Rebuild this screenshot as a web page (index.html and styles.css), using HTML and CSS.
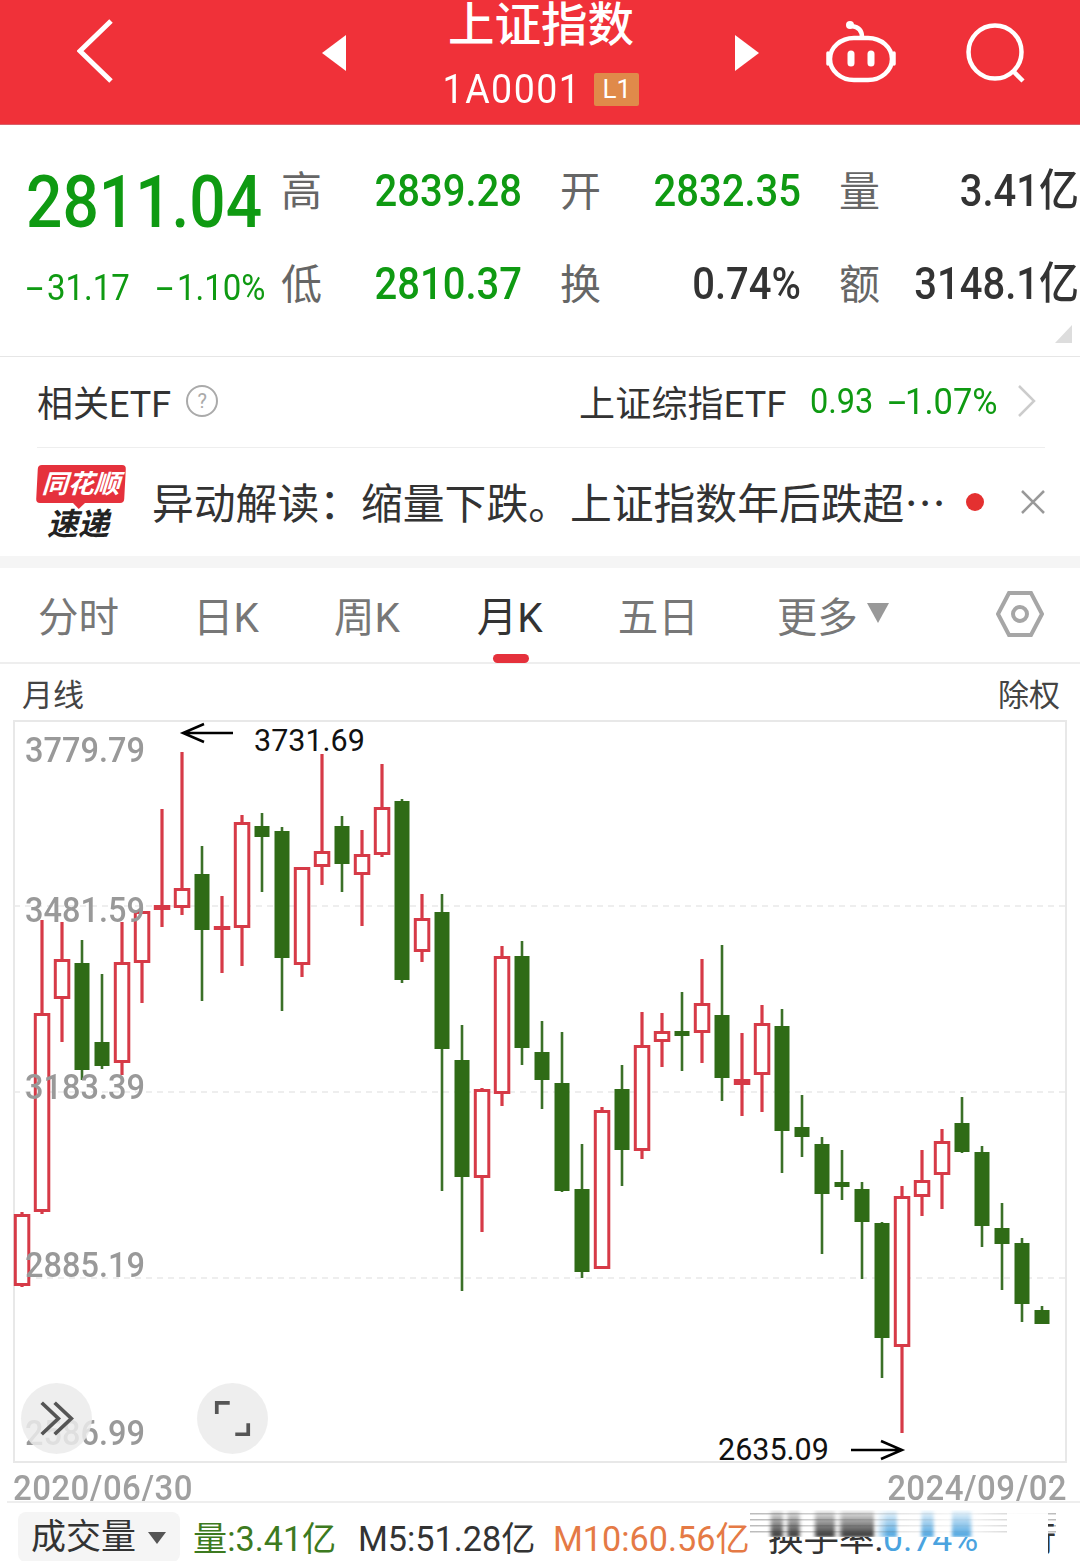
FILE: index.html
```html
<!DOCTYPE html>
<html lang="zh">
<head>
    <meta charset="UTF-8"/>
    <title>上证指数</title>
    <link rel="stylesheet" href="styles.css">
</head>
<body>
<header class="top-bar">
    <svg class="back-icon" viewBox="0 0 36 64"><polyline points="34,2 3,32 34,62"/></svg>
    <svg class="prev-icon" viewBox="0 0 24 36"><polygon points="24,0 24,36 0,18"/></svg>
    <div class="title-block">
        <div class="title">上证指数</div>
        <div class="code-line"><span class="code">1A0001</span><span class="level">L1</span></div>
    </div>
    <svg class="next-icon" viewBox="0 0 24 36"><polygon points="0,0 0,36 24,18"/></svg>
    <svg class="robot-icon" viewBox="0 0 70 64">
        <rect x="4" y="18" width="62" height="42" rx="24" ry="21"/>
        <path class="ear" d="M2 33 V44 M68 33 V44"/>
        <circle class="ball" cx="24" cy="5" r="4"/>
        <path d="M26 6 C32 7 36 10 36 17"/>
        <line class="eye" x1="25" y1="34" x2="25" y2="43"/>
        <line class="eye" x1="45" y1="34" x2="45" y2="43"/>
    </svg>
    <svg class="search-icon" viewBox="0 0 62 66">
        <circle cx="29" cy="31" r="26.5"/>
        <line x1="47" y1="50" x2="57" y2="60"/>
    </svg>
</header>

<section class="quote">
    <div class="quote-main">
        <div class="price"><span class="num">2811.04</span></div>
        <div class="change"><span class="num"><i class="minus">-</i>31.17</span><span class="num"><i class="minus">-</i>1.10%</span></div>
    </div>
    <div class="quote-grid">
        <div class="cell"><span class="cell-label">高</span><span class="cell-value green num">2839.28</span></div>
        <div class="cell"><span class="cell-label">开</span><span class="cell-value green num">2832.35</span></div>
        <div class="cell"><span class="cell-label">量</span><span class="cell-value num">3.41亿</span></div>
        <div class="cell"><span class="cell-label">低</span><span class="cell-value green num">2810.37</span></div>
        <div class="cell"><span class="cell-label">换</span><span class="cell-value num">0.74%</span></div>
        <div class="cell"><span class="cell-label">额</span><span class="cell-value num">3148.1亿</span></div>
    </div>
    <div class="corner-mark"></div>
</section>

<section class="etf-row">
    <div class="etf-left">相关ETF<span class="help">?</span></div>
    <div class="etf-right">
        <span class="etf-name">上证综指ETF</span>
        <span class="etf-price green">0.93</span>
        <span class="etf-change green"><i class="minus">-</i>1.07%</span>
        <svg class="chevron" viewBox="0 0 20 34"><polyline points="2,2 17,17 2,32"/></svg>
    </div>
</section>

<section class="news-row">
    <div class="news-logo">
        <div class="logo-top">同花顺</div>
        <div class="logo-bottom">速递</div>
    </div>
    <div class="news-text">异动解读：缩量下跌。上证指数年后跌超…</div>
    <span class="news-dot"></span>
    <svg class="news-close" viewBox="0 0 26 26"><path d="M2 2 L24 24 M24 2 L2 24"/></svg>
</section>

<nav class="tabs">
    <span class="tab tab-fs">分时</span>
    <span class="tab tab-rk">日K</span>
    <span class="tab tab-zk">周K</span>
    <span class="tab tab-yk active">月K</span>
    <span class="tab tab-wr">五日</span>
    <span class="tab tab-more">更多<i class="tri"></i></span>
    <svg class="hex-icon" viewBox="0 0 48 46">
        <polygon points="13,2 35,2 46,23 35,44 13,44 2,23"/>
        <circle cx="24" cy="23" r="7"/>
    </svg>
</nav>

<div class="chart-head"><span>月线</span><span>除权</span></div>

<div class="chart" id="chart">
    <svg id="candles" class="candles" width="1054" height="743" viewBox="13 720 1054 743"></svg>
    <span class="axis axis-1">3779.79</span>
    <span class="axis axis-2">3481.59</span>
    <span class="axis axis-3">3183.39</span>
    <span class="axis axis-4">2885.19</span>
    <span class="axis axis-5">2586.99</span>
    <span class="note note-high">3731.69</span>
    <span class="note note-low">2635.09</span>
    <button class="round-btn btn-next">
        <svg viewBox="0 0 40 40"><path d="M4 3 L22 20 L4 37 M18 3 L36 20 L18 37"/></svg>
    </button>
    <button class="round-btn btn-full">
        <svg viewBox="0 0 40 40"><path d="M3 15 V3 H17 M37 25 V37 H23"/></svg>
    </button>
</div>

<div class="dates"><span>2020/06/30</span><span>2024/09/02</span></div>

<footer class="volume-bar">
    <div class="chip">成交量<i class="chip-tri"></i></div>
    <span class="vol vol-now">量:<b>3.41亿</b></span>
    <span class="vol vol-m5">M5:51.28亿</span>
    <span class="vol vol-m10">M10:60.56亿</span>
    <span class="vol vol-rate">换手率:<b>0.74%</b></span>
    <span class="vol vol-cut">行</span>
    <div class="smear"></div>
</footer>

<script src="chart.js"></script>
</body>
</html>
```

FILE: styles.css
```css
body {
    margin: 0;
    width: 1080px;
    height: 1561px;
    overflow: hidden;
    background: #ffffff;
    color: #333333;
    font-family: Roboto, "Noto Sans CJK SC", sans-serif;
}

.green { color: #0f9a12; }

/* digits in the shot are taller than Roboto */
.num {
    display: inline-block;
    transform: scaleY(1.12);
}

/* the app draws a long, thin minus */
.minus {
    display: inline-block;
    width: 21px;
    font-style: normal;
    transform: scaleX(1.9);
    transform-origin: left center;
}

/* red bar */
.top-bar {
    height: 124px;
    background: #f03139;
    border-bottom: 1px solid #d9606a;
    display: flex;
    align-items: flex-start;
    padding-left: 77px;
}

.back-icon {
    width: 36px;
    height: 64px;
    margin-top: 19px;
}
.back-icon polyline {
    fill: none;
    stroke: #ffffff;
    stroke-width: 5;
}

.prev-icon, .next-icon {
    width: 24px;
    height: 36px;
    margin-top: 35px;
    fill: #ffffff;
}
.prev-icon { margin-left: 209px; }

.title-block {
    width: 390px;
    text-align: center;
    color: #ffffff;
}
.title {
    font-size: 46.5px;
    line-height: 50px;
    font-weight: 500;
    height: 69px;
}
.code-line {
    display: flex;
    justify-content: center;
    align-items: center;
    gap: 13px;
    height: 40px;
}
.code {
    font-size: 37.5px;
    letter-spacing: 1.5px;
    display: inline-block;
    transform: scaleY(1.1);
}
.level {
    width: 45px;
    height: 33px;
    background: #e08a4a;
    border-radius: 2px;
    font-size: 26px;
    line-height: 33px;
}

.next-icon { margin-left: -1px; }

.robot-icon {
    width: 70px;
    height: 64px;
    margin-left: 67px;
    margin-top: 20px;
    fill: none;
    stroke: #ffffff;
    stroke-width: 4.5;
}
.robot-icon .ball {
    fill: #ffffff;
    stroke: none;
}
.robot-icon .ear {
    stroke-width: 3.5;
    stroke-linecap: round;
}
.robot-icon .eye {
    stroke-width: 7;
    stroke-linecap: round;
}

.search-icon {
    width: 62px;
    height: 66px;
    margin-left: 70px;
    margin-top: 21px;
    fill: none;
    stroke: #ffffff;
    stroke-width: 4.5;
}

/* quote block */
.quote {
    position: relative;
    height: 232px;
    border-bottom: 1px solid #e6e6e6;
    display: flex;
    box-sizing: border-box;
    padding-left: 26px;
}
.quote-main {
    width: 255px;
}
.price {
    margin-top: 40px;
    font-size: 64px;
    line-height: 76px;
    font-weight: 500;
    color: #0f9a12;
}
.change {
    margin-top: 27px;
    display: flex;
    gap: 26px;
    font-size: 33px;
    line-height: 40px;
    color: #0f9a12;
}
.quote-grid {
    display: grid;
    grid-template-columns: 240px 240px 239px;
    column-gap: 39px;
    grid-auto-rows: 93px;
    padding-top: 19px;
}
.cell {
    display: flex;
    justify-content: space-between;
    align-items: center;
    height: 93px;
}
.cell-label {
    font-size: 41px;
    color: #666666;
    width: 41px;
    margin-top: -6px;
}
.cell-value {
    font-size: 40px;
    line-height: 46px;
    height: 46px;
    font-weight: 500;
    white-space: nowrap;
    margin-right: -1px;
}
.corner-mark {
    position: absolute;
    right: 8px;
    bottom: 13px;
    width: 0;
    height: 0;
    border-left: 17px solid transparent;
    border-bottom: 18px solid #dddddd;
}

/* etf row */
.etf-row {
    height: 91px;
    margin: 0 35px 0 37px;
    padding-bottom: 2px;
    border-bottom: 1px solid #eeeeee;
    box-sizing: border-box;
    display: flex;
    justify-content: space-between;
    align-items: center;
    font-size: 36px;
}
.etf-left {
    display: flex;
    align-items: center;
}
.help {
    width: 28px;
    height: 28px;
    margin-left: 15px;
    border: 2px solid #aaaaaa;
    border-radius: 50%;
    color: #aaaaaa;
    font-size: 20px;
    line-height: 28px;
    text-align: center;
}
.etf-right {
    display: flex;
    align-items: center;
    padding-right: 8px;
}
.etf-name { width: 231px; letter-spacing: 0.2px; }
.etf-price {
    width: 78px;
    font-size: 32.5px;
    transform: scaleY(1.1);
}
.etf-change {
    width: 129px;
    font-size: 34.5px;
    transform: scaleY(1.06);
}
.etf-change .minus { width: 17px; }
.chevron {
    width: 20px;
    height: 34px;
    fill: none;
    stroke: #cccccc;
    stroke-width: 2.5;
}

/* news row */
.news-row {
    height: 108px;
    padding-left: 37px;
    display: flex;
    align-items: center;
    border-bottom: 12px solid #f5f5f5;
}
.news-logo {
    width: 88px;
    text-align: center;
    font-style: italic;
    font-weight: 700;
}
.logo-top {
    position: relative;
    height: 38px;
    background: #e5313c;
    color: #ffffff;
    font-size: 26px;
    line-height: 38px;
    white-space: nowrap;
    border-radius: 4px;
    transform: skewX(-3deg);
}
.logo-top::after {
    content: "";
    position: absolute;
    left: 36px;
    bottom: -6px;
    width: 0;
    height: 0;
    border-left: 7px solid transparent;
    border-right: 7px solid transparent;
    border-top: 7px solid #e5313c;
}
.logo-bottom {
    font-size: 31px;
    line-height: 30px;
    margin-top: 7px;
    margin-left: -6px;
    color: #222222;
}
.news-text {
    margin-left: 27px;
    margin-top: -3px;
    width: 798px;
    font-family: "Noto Sans CJK SC", sans-serif;
    font-size: 41.8px;
    white-space: nowrap;
    color: #333333;
}
.news-dot {
    width: 18px;
    height: 18px;
    background: #e43030;
    border-radius: 50%;
    margin-left: 16px;
}
.news-close {
    width: 26px;
    height: 26px;
    margin-left: 36px;
    fill: none;
    stroke: #999999;
    stroke-width: 2.5;
}

/* period tabs */
.tabs {
    position: relative;
    height: 94px;
    border-bottom: 2px solid #eeeeee;
    display: flex;
    align-items: center;
    font-size: 40.5px;
    color: #777777;
}
.tab { position: relative; top: -1px; white-space: nowrap; }
.tab-fs { margin-left: 38px; }
.tab-rk { margin-left: 74px; }
.tab-zk { margin-left: 75px; }
.tab-yk { margin-left: 77px; color: #333333; }
.tab-wr { margin-left: 75px; }
.tab-more { margin-left: 78px; display: flex; align-items: center; }
.tri {
    width: 0;
    height: 0;
    margin-left: 9px;
    margin-bottom: 2px;
    border-left: 11px solid transparent;
    border-right: 11px solid transparent;
    border-top: 20px solid #999999;
}
.tab.active::after {
    content: "";
    position: absolute;
    left: 16px;
    bottom: -19px;
    width: 36px;
    height: 9px;
    background: #e5313c;
    border-radius: 5px;
}
.hex-icon {
    width: 48px;
    height: 46px;
    margin-left: 107px;
    margin-top: -2px;
    fill: none;
    stroke: #a6a6a6;
    stroke-width: 4;
}

.chart-head {
    height: 56px;
    padding: 0 20px 0 22px;
    display: flex;
    justify-content: space-between;
    align-items: center;
    font-size: 31px;
    color: #444444;
}

/* chart, free canvas */
.chart {
    position: relative;
    width: 1054px;
    height: 743px;
    margin-left: 13px;
}
.candles {
    position: absolute;
    left: 0;
    top: 0;
}
.axis {
    position: absolute;
    left: 12px;
    font-size: 32.5px;
    font-weight: 500;
    line-height: 36px;
    color: #999999;
    transform: scaleY(1.08);
}
.axis-1 { top: 12px; }
.axis-2 { top: 172px; }
.axis-3 { top: 349px; }
.axis-4 { top: 527px; }
.axis-5 { top: 695px; }
.note {
    position: absolute;
    font-size: 30.5px;
    line-height: 36px;
    color: #111111;
}
.note-high { left: 241px; top: 3px; }
.note-low { left: 705px; top: 712px; }
.round-btn {
    position: absolute;
    top: 663px;
    width: 71px;
    height: 71px;
    padding: 17px;
    border: 0;
    border-radius: 50%;
    background: rgba(235, 235, 235, 0.85);
}
.round-btn svg {
    display: block;
    width: 37px;
    height: 37px;
    fill: none;
    stroke: #555555;
    stroke-width: 4;
}
.btn-next { left: 8px; }
.btn-full { left: 184px; }

.dates {
    height: 38px;
    box-sizing: border-box;
    padding: 10px 13px 0;
    display: flex;
    justify-content: space-between;
    align-items: center;
    font-size: 33px;
    font-weight: 500;
    letter-spacing: 0.4px;
    color: #a0a0a0;
    transform: scaleY(1.05);
}

/* volume legend */
.volume-bar {
    position: relative;
    height: 60px;
    margin-left: 7px;
    border-top: 2px solid #eeeeee;
    font-size: 34.2px;
    white-space: nowrap;
}
.chip {
    position: absolute;
    left: 11px;
    top: 9px;
    width: 162px;
    height: 50px;
    box-sizing: border-box;
    padding-left: 13px;
    background: #f5f5f5;
    border-radius: 8px;
    font-size: 35px;
    line-height: 52px;
    color: #333333;
}
.chip-tri {
    position: absolute;
    left: 130px;
    top: 20px;
    width: 0;
    height: 0;
    border-left: 9px solid transparent;
    border-right: 9px solid transparent;
    border-top: 12px solid #555555;
}
.vol {
    position: absolute;
    top: 13px;
    line-height: 46px;
}
.vol b { font-weight: 400; }
.vol-now { left: 186px; color: #3d7a20; }
.vol-m5 { left: 351px; color: #333333; }
.vol-m10 { left: 546px; color: #e57a45; }
.vol-rate { left: 761px; color: #333333; font-size: 35.5px; }
.vol-rate b { color: #4aa3df; }
/* sits under a white patch, only its right edge shows */
.vol-cut {
    left: 1015px;
    z-index: 1;
    color: #333333;
}

/* white patch that hides the left of the last label */
.volume-bar::after {
    content: "";
    position: absolute;
    z-index: 2;
    left: 1000px;
    top: 5px;
    width: 41px;
    height: 55px;
    background: linear-gradient(180deg, transparent 0, #ffffff 6px);
}

/* screenshot smear across the top of the legend */
.smear {
    position: absolute;
    left: 743px;
    top: 7px;
    width: 306px;
    height: 27px;
    background: #ffffff;
    overflow: hidden;
}
.smear::before {
    content: "";
    position: absolute;
    inset: 0;
    background: linear-gradient(90deg,
        transparent 6%, #333 7.5%, #333 10%, transparent 11.5%,
        #333 13%, #333 15.5%, transparent 17%,
        transparent 20.5%, #333 22%, #333 27%, transparent 28.5%,
        #333 30.5%, #333 40%, transparent 41%,
        #4aa3df 45%, #4aa3df 47.5%, transparent 48.5%,
        transparent 55.5%, #4aa3df 56.5%, #4aa3df 59.5%, transparent 60.5%,
        transparent 65.5%, #4aa3df 66.5%, #4aa3df 71.5%, transparent 73%);
    filter: blur(1.5px);
    -webkit-mask-image: linear-gradient(to top, #000, rgba(0, 0, 0, 0.55) 50%, rgba(0, 0, 0, 0.08));
    mask-image: linear-gradient(to top, #000, rgba(0, 0, 0, 0.55) 50%, rgba(0, 0, 0, 0.08));
}
.smear::after {
    content: "";
    position: absolute;
    inset: 0;
    background: repeating-linear-gradient(180deg,
        rgba(60, 60, 60, 0.35) 3px, rgba(60, 60, 60, 0.35) 4px, transparent 5px, transparent 9px);
    -webkit-mask-image: linear-gradient(90deg, #000, rgba(0, 0, 0, 0.1) 70%, #000);
    mask-image: linear-gradient(90deg, #000, rgba(0, 0, 0, 0.1) 70%, #000);
}
```

FILE: chart.js
```js
// one candle: [high, body top, body bottom, low, up?]  values are screen y, x steps by 20
const candles = [
    [1212, 1214, 1286, 1287, 1], [920, 1013, 1212, 1214, 1], [922, 959, 999, 1042, 1], [940, 963, 1070, 1080, 0],
    [974, 1042, 1066, 1069, 0], [922, 962, 1063, 1075, 1], [911, 911, 963, 1003, 1], [809, 905, 910, 927, 1],
    [752, 888, 908, 915, 1], [846, 874, 930, 1001, 0], [896, 926, 928, 973, 1], [815, 822, 928, 966, 1],
    [813, 826, 837, 892, 0], [827, 831, 958, 1011, 0], [867, 867, 965, 977, 1], [754, 851, 867, 885, 1],
    [816, 826, 864, 892, 0], [830, 854, 875, 926, 1], [764, 807, 855, 857, 1], [799, 801, 980, 983, 0],
    [894, 918, 952, 962, 1], [894, 912, 1049, 1191, 0], [1025, 1060, 1177, 1291, 0], [1088, 1089, 1178, 1232, 1],
    [946, 956, 1094, 1106, 1], [941, 956, 1048, 1065, 0], [1021, 1052, 1080, 1109, 0], [1032, 1083, 1191, 1192, 0],
    [1144, 1189, 1272, 1278, 0], [1107, 1110, 1269, 1269, 1], [1065, 1089, 1150, 1186, 0], [1012, 1045, 1151, 1159, 1],
    [1013, 1031, 1042, 1067, 1], [992, 1031, 1036, 1071, 0], [959, 1003, 1033, 1063, 1], [945, 1015, 1078, 1101, 0],
    [1033, 1079, 1085, 1116, 1], [1005, 1023, 1075, 1112, 1], [1009, 1026, 1131, 1173, 0], [1095, 1127, 1137, 1157, 0],
    [1137, 1144, 1194, 1254, 0], [1150, 1182, 1187, 1200, 0], [1182, 1189, 1222, 1279, 0], [1222, 1223, 1338, 1378, 0],
    [1186, 1196, 1347, 1433, 1], [1150, 1180, 1197, 1216, 1], [1129, 1141, 1175, 1209, 1], [1097, 1123, 1152, 1153, 0],
    [1146, 1152, 1226, 1247, 0], [1203, 1228, 1244, 1290, 0], [1238, 1243, 1304, 1322, 0], [1306, 1310, 1324, 1324, 0]
];

const RED = "#d63a47";
const GREEN = "#2f6b16";
const svg = document.getElementById("candles");

function add(tag, attrs) {
    const el = document.createElementNS("http://www.w3.org/2000/svg", tag);
    for (const k in attrs) el.setAttribute(k, attrs[k]);
    svg.appendChild(el);
    return el;
}

// frame and dashed grid
add("rect", {x: 14, y: 721, width: 1052, height: 741, fill: "none", stroke: "#e8e8e8", "stroke-width": 2});
[906, 1092, 1278].forEach(y => {
    add("line", {x1: 14, x2: 1066, y1: y, y2: y, stroke: "#e9e9e9", "stroke-width": 1.5, "stroke-dasharray": "6 5"});
});

candles.forEach((c, i) => {
    const x = 22 + i * 20;
    if (c[4]) {
        add("line", {x1: x, x2: x, y1: c[0], y2: c[3], stroke: RED, "stroke-width": 3.2});
        add("rect", {x: x - 6.7, y: c[1] + 1.5, width: 13.5, height: Math.max(c[2] - c[1] - 3, 1), fill: "#ffffff", stroke: RED, "stroke-width": 3});
    } else {
        add("line", {x1: x, x2: x, y1: c[0], y2: c[3], stroke: "#3b7028", "stroke-width": 2.6});
        add("rect", {x: x - 7.5, y: c[1], width: 15, height: c[2] - c[1], fill: GREEN});
    }
});

// hand drawn arrows on the high and low
add("path", {d: "M233 733 H184 M204 724 L183 733 L204 742", fill: "none", stroke: "#000000", "stroke-width": 2.5});
add("path", {d: "M851 1450 H901 M881 1441 L902 1450 L881 1459", fill: "none", stroke: "#000000", "stroke-width": 2.5});
```
